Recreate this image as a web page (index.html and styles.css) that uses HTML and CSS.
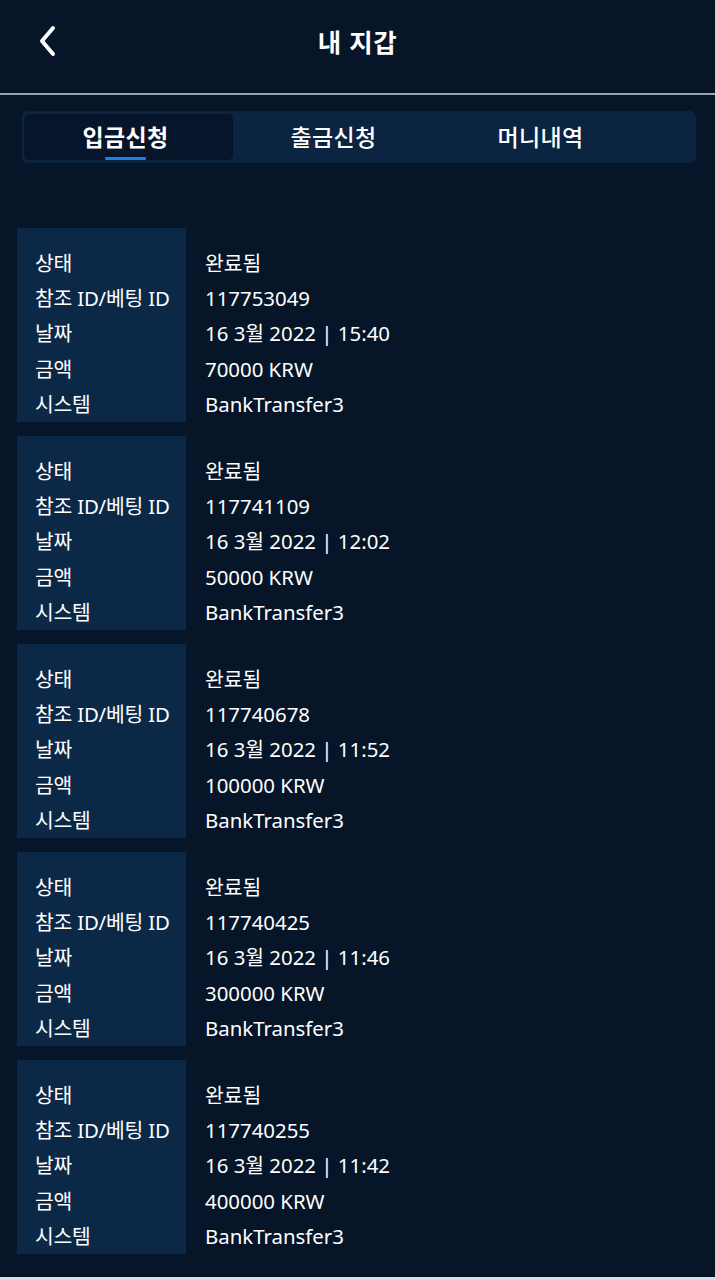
FILE: index.html
```html
<!DOCTYPE html>
<html lang="ko">
<head>
<meta charset="utf-8">
<title>내 지갑</title>
<link rel="stylesheet" href="styles.css">
</head>
<body>
<div class="page">
  <header class="header">
    <button class="back" aria-label="back">
      <svg width="24" height="34" viewBox="0 0 24 34"><path d="M16 4 L5 17 L16 30" fill="none" stroke="#ffffff" stroke-width="4" stroke-linecap="round" stroke-linejoin="round"/></svg>
    </button>
    <h1 class="title">내 지갑</h1>
  </header>
  <nav class="tabs">
    <div class="tab active">입금신청</div>
    <div class="tab">출금신청</div>
    <div class="tab">머니내역</div>
  </nav>
  <main class="list">
    <section class="card">
      <div class="labels"><div>상태</div><div>참조 ID/베팅 ID</div><div>날짜</div><div>금액</div><div>시스템</div></div>
      <div class="values"><div>완료됨</div><div>117753049</div><div>16 3월 2022 | 15:40</div><div>70000 KRW</div><div>BankTransfer3</div></div>
    </section>
    <section class="card">
      <div class="labels"><div>상태</div><div>참조 ID/베팅 ID</div><div>날짜</div><div>금액</div><div>시스템</div></div>
      <div class="values"><div>완료됨</div><div>117741109</div><div>16 3월 2022 | 12:02</div><div>50000 KRW</div><div>BankTransfer3</div></div>
    </section>
    <section class="card">
      <div class="labels"><div>상태</div><div>참조 ID/베팅 ID</div><div>날짜</div><div>금액</div><div>시스템</div></div>
      <div class="values"><div>완료됨</div><div>117740678</div><div>16 3월 2022 | 11:52</div><div>100000 KRW</div><div>BankTransfer3</div></div>
    </section>
    <section class="card">
      <div class="labels"><div>상태</div><div>참조 ID/베팅 ID</div><div>날짜</div><div>금액</div><div>시스템</div></div>
      <div class="values"><div>완료됨</div><div>117740425</div><div>16 3월 2022 | 11:46</div><div>300000 KRW</div><div>BankTransfer3</div></div>
    </section>
    <section class="card">
      <div class="labels"><div>상태</div><div>참조 ID/베팅 ID</div><div>날짜</div><div>금액</div><div>시스템</div></div>
      <div class="values"><div>완료됨</div><div>117740255</div><div>16 3월 2022 | 11:42</div><div>400000 KRW</div><div>BankTransfer3</div></div>
    </section>
  </main>
  <div class="bottom-bar"></div>
</div>
</body>
</html>
```
FILE: styles.css
```css
* { box-sizing: border-box; }
html, body {
  margin: 0;
  padding: 0;
  background: #061528;
}
body {
  font-family: "Noto Sans", "Noto Sans CJK KR", sans-serif;
  color: #ffffff;
}
.page {
  width: 715px;
  height: 1280px;
  display: flex;
  flex-direction: column;
  overflow: hidden;
}
.header {
  height: 95px;
  flex: none;
  display: flex;
  align-items: center;
  justify-content: center;
  border-bottom: 2px solid #9aa3ad;
  padding-bottom: 12px;
  position: relative;
}
.back {
  position: absolute;
  left: 37px;
  top: 24px;
  background: none;
  border: 0;
  padding: 0;
  width: 24px;
  height: 34px;
}
.back svg { display: block; }
.title {
  margin: 0;
  font-family: "Noto Sans CJK KR", sans-serif;
  font-weight: 700;
  font-size: 25.5px;
  line-height: 1;
  letter-spacing: 0.5px;
}
.tabs {
  margin: 16px 19px 0 22px;
  height: 52px;
  background: #0b2441;
  border-radius: 6px;
  padding: 3px 2px;
  display: flex;
  flex: none;
}
.tab {
  width: 207px;
  display: flex;
  align-items: center;
  justify-content: center;
  font-family: "Noto Sans CJK KR", sans-serif;
  font-size: 23px;
  font-weight: 500;
  letter-spacing: 0.3px;
  color: #ffffff;
  padding-bottom: 2px;
  padding-right: 6px;
  position: relative;
  border-radius: 5px;
}
.tab.active {
  width: 209px;
  background: #061529;
  font-weight: 700;
}
.tab.active::after {
  content: "";
  position: absolute;
  left: 81px;
  bottom: 0;
  width: 41px;
  height: 3px;
  background: #1b7fe3;
  border-radius: 1px;
}
.list {
  margin-top: 65px;
  padding-left: 17px;
  display: flex;
  flex-direction: column;
  gap: 14px;
  flex: none;
}
.card {
  display: flex;
  height: 194px;
}
.labels, .values {
  padding-top: 18px;
  font-size: 20.4px;
  line-height: 35.2px;
}
.labels {
  width: 169px;
  background: #0b2947;
  padding-left: 18px;
  letter-spacing: -0.2px;
}
.values {
  padding-left: 19px;
}
.bottom-bar {
  margin-top: auto;
  height: 3px;
  background: #d6dde4;
  flex: none;
}
```
